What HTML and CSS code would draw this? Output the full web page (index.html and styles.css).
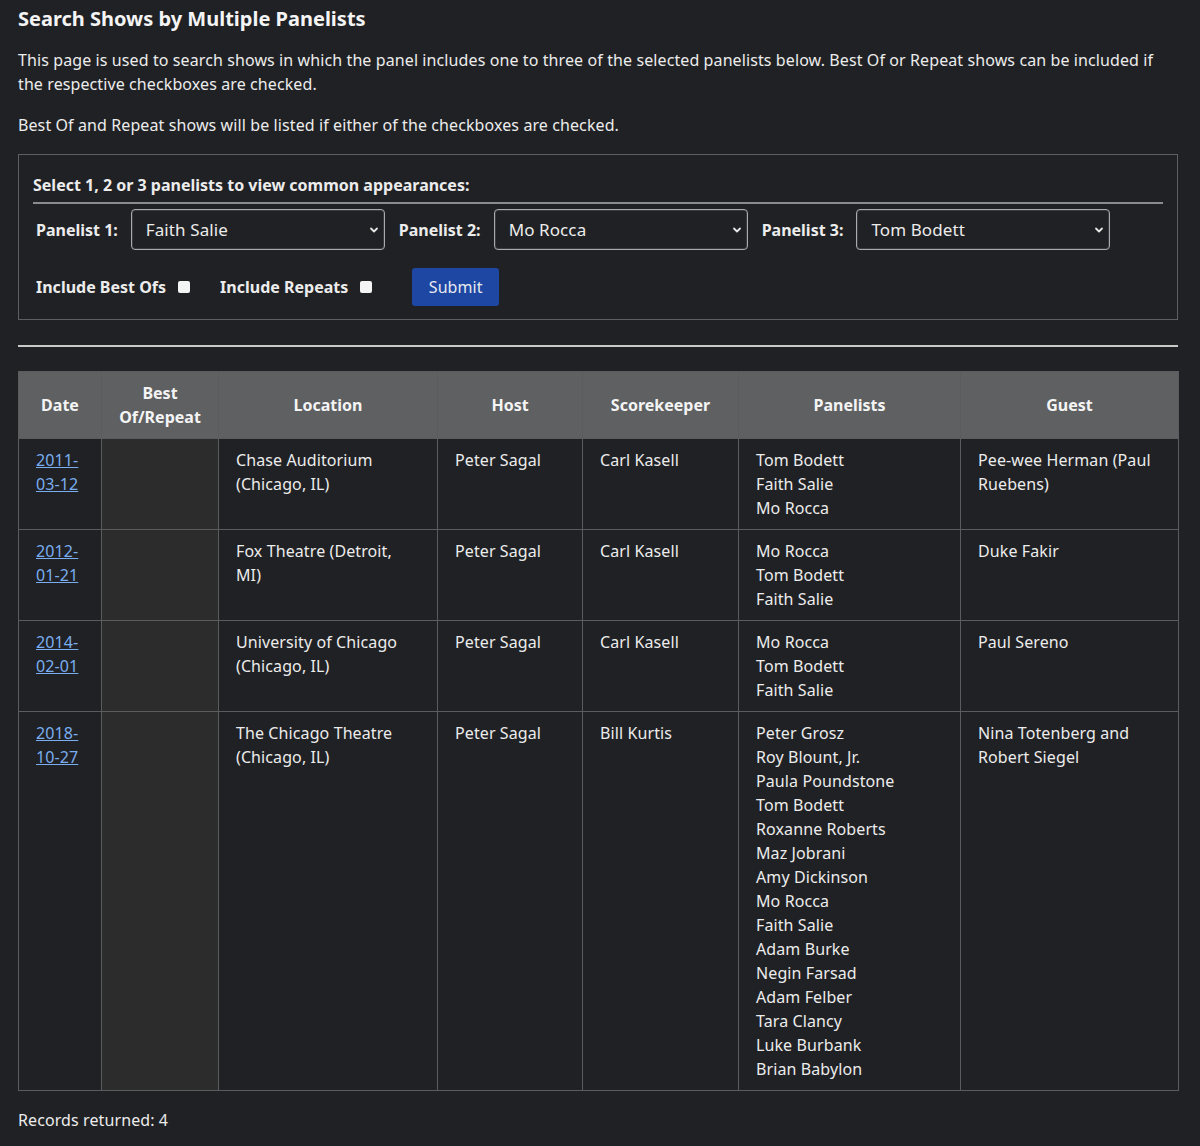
FILE: index.html
```html
<!DOCTYPE html>
<html lang="en">
<head>
<meta charset="utf-8">
<title>Search Shows by Multiple Panelists</title>
<link rel="stylesheet" href="styles.css">
</head>
<body>
<main class="page">
  <h1 class="title">Search Shows by Multiple Panelists</h1>
  <p class="intro">This page is used to search shows in which the panel includes one to three of the selected panelists below. Best Of or Repeat shows can be included if the respective checkboxes are checked.</p>
  <p class="intro">Best Of and Repeat shows will be listed if either of the checkboxes are checked.</p>

  <form class="search">
    <div class="legend">Select 1, 2 or 3 panelists to view common appearances:</div>
    <div class="row">
      <label class="lbl">Panelist 1:</label>
      <div class="select"><span>Faith Salie</span><svg class="chev" viewBox="0 0 10 10" width="10" height="10"><path d="M2 3.5 L5 6.5 L8 3.5" fill="none" stroke="#e6e6e6" stroke-width="1.8" stroke-linecap="round" stroke-linejoin="round"/></svg></div>
      <label class="lbl">Panelist 2:</label>
      <div class="select"><span>Mo Rocca</span><svg class="chev" viewBox="0 0 10 10" width="10" height="10"><path d="M2 3.5 L5 6.5 L8 3.5" fill="none" stroke="#e6e6e6" stroke-width="1.8" stroke-linecap="round" stroke-linejoin="round"/></svg></div>
      <label class="lbl">Panelist 3:</label>
      <div class="select"><span>Tom Bodett</span><svg class="chev" viewBox="0 0 10 10" width="10" height="10"><path d="M2 3.5 L5 6.5 L8 3.5" fill="none" stroke="#e6e6e6" stroke-width="1.8" stroke-linecap="round" stroke-linejoin="round"/></svg></div>
    </div>
    <div class="row row2">
      <label class="lbl">Include Best Ofs</label><span class="check"></span>
      <label class="lbl lbl-gap">Include Repeats</label><span class="check"></span>
      <button type="button" class="submit">Submit</button>
    </div>
  </form>

  <hr class="divider">

  <table class="results">
    <colgroup>
      <col class="c-date"><col class="c-best"><col class="c-loc"><col class="c-host"><col class="c-score"><col class="c-pan"><col class="c-guest">
    </colgroup>
    <thead>
      <tr><th>Date</th><th>Best Of/Repeat</th><th>Location</th><th>Host</th><th>Scorekeeper</th><th>Panelists</th><th>Guest</th></tr>
    </thead>
    <tbody>
      <tr>
        <td><a href="#">2011-03-12</a></td><td class="best"></td>
        <td>Chase Auditorium (Chicago, IL)</td><td>Peter Sagal</td><td>Carl Kasell</td>
        <td>Tom Bodett<br>Faith Salie<br>Mo Rocca</td>
        <td>Pee-wee Herman (Paul Ruebens)</td>
      </tr>
      <tr>
        <td><a href="#">2012-01-21</a></td><td class="best"></td>
        <td>Fox Theatre (Detroit, MI)</td><td>Peter Sagal</td><td>Carl Kasell</td>
        <td>Mo Rocca<br>Tom Bodett<br>Faith Salie</td>
        <td>Duke Fakir</td>
      </tr>
      <tr>
        <td><a href="#">2014-02-01</a></td><td class="best"></td>
        <td>University of Chicago (Chicago, IL)</td><td>Peter Sagal</td><td>Carl Kasell</td>
        <td>Mo Rocca<br>Tom Bodett<br>Faith Salie</td>
        <td>Paul Sereno</td>
      </tr>
      <tr>
        <td><a href="#">2018-10-27</a></td><td class="best"></td>
        <td>The Chicago Theatre (Chicago, IL)</td><td>Peter Sagal</td><td>Bill Kurtis</td>
        <td>Peter Grosz<br>Roy Blount, Jr.<br>Paula Poundstone<br>Tom Bodett<br>Roxanne Roberts<br>Maz Jobrani<br>Amy Dickinson<br>Mo Rocca<br>Faith Salie<br>Adam Burke<br>Negin Farsad<br>Adam Felber<br>Tara Clancy<br>Luke Burbank<br>Brian Babylon</td>
        <td>Nina Totenberg and Robert Siegel</td>
      </tr>
    </tbody>
  </table>

  <p class="count">Records returned: 4</p>
</main>
</body>
</html>
```

FILE: styles.css
```css
html, body {
  margin: 0;
  padding: 0;
  background: #202124;
}
body {
  color: #ececec;
  font-family: "Noto Sans", "Open Sans", sans-serif;
  font-size: 16px;
  line-height: 24px;
  letter-spacing: 0.1px;
}
.page {
  width: 1160px;
  padding: 0 22px 0 18px;
}
.title {
  font-size: 20px;
  line-height: 26px;
  font-weight: 700;
  letter-spacing: 0;
  margin: 6px 0 0;
  color: #f4f4f4;
}
.intro {
  margin: 17px 0 0;
}
.title + .intro {
  margin-top: 16px;
}
.search {
  margin: 17px 0 0;
  border: 1px solid #5e5f61;
  padding: 18px 14px 13px;
}
.legend {
  font-weight: 700;
  letter-spacing: 0;
  line-height: 24px;
  padding-bottom: 5px;
  border-bottom: 2px solid #8a8b8d;
}
.row {
  display: flex;
  align-items: center;
  padding-left: 3px;
  margin-top: 5px;
}
.row2 {
  margin-top: 18px;
}
.lbl {
  font-weight: 700;
  letter-spacing: 0;
  margin-right: 13px;
  white-space: nowrap;
}
.select {
  position: relative;
  box-sizing: border-box;
  width: 254px;
  height: 41px;
  border: 1px solid #a9aaac;
  border-radius: 4px;
  box-shadow: inset 0 0 0 1px #3a3b3e;
  padding: 0 14px;
  display: flex;
  align-items: center;
  margin-right: 14px;
  font-size: 17px;
}
.chev {
  position: absolute;
  right: 5px;
  top: 15px;
}
.check {
  width: 12px;
  height: 12px;
  background: #f4f4f4;
  border-radius: 2px;
  margin-left: 0;
}
.row2 .lbl {
  margin-right: 12px;
}
.lbl-gap {
  margin-left: 30px;
}
.submit {
  margin-left: 40px;
  width: 87px;
  height: 38px;
  border: 0;
  border-radius: 3px;
  background: #1e47a3;
  color: #e8eaf0;
  font-family: inherit;
  font-size: 16px;
  letter-spacing: 0.1px;
  padding: 0;
}
.divider {
  margin: 25px 0 0;
  border: 0;
  height: 2px;
  background: #c9c9c9;
}
.results {
  margin-top: 24px;
  width: 1160px;
  border-collapse: collapse;
  table-layout: fixed;
}
.c-date { width: 83px; }
.c-best { width: 117px; }
.c-loc { width: 219px; }
.c-host { width: 145px; }
.c-score { width: 156px; }
.c-pan { width: 222px; }
.c-guest { width: 218px; }
.results th, .results td {
  border: 1px solid #5b5c5e;
  padding: 9px 17px 9px 17px;
  vertical-align: top;
}
.results th {
  background: #5f6062;
  font-weight: 700;
  letter-spacing: 0;
  text-align: center;
  vertical-align: middle;
  color: #f4f4f4;
  padding: 9px 12px;
}
.results td.best {
  background: #2c2c2c;
}
.results a {
  color: #7aaef0;
  text-decoration: underline;
}
.count {
  margin: 17px 0 0;
}
```
